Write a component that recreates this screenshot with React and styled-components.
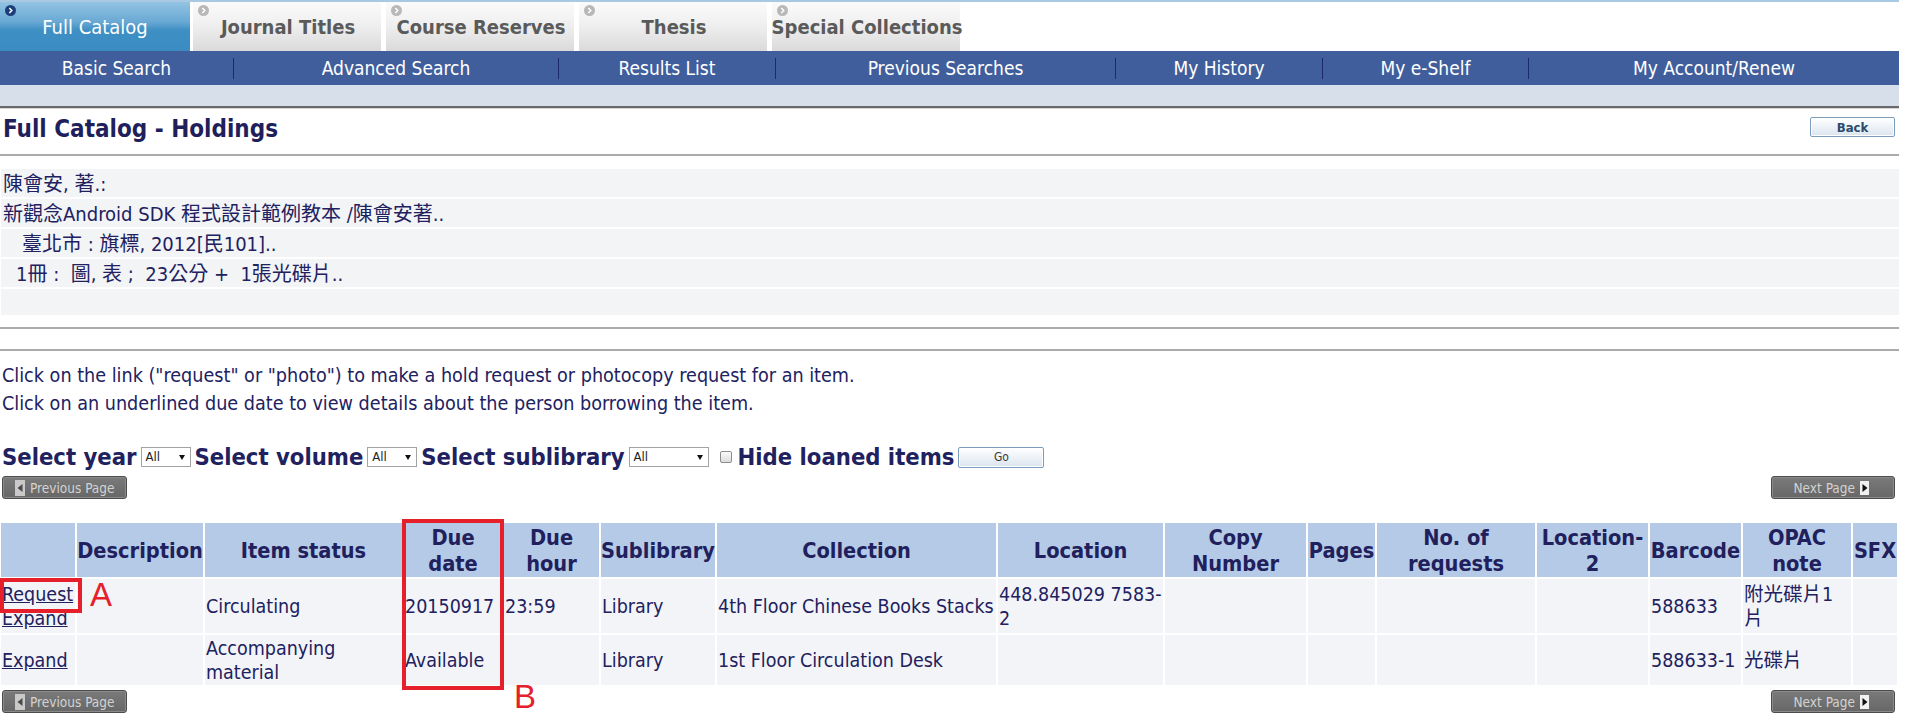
import React from "react";
import styled, { createGlobalStyle, css } from "styled-components";

const FONT = `"DejaVu Sans Condensed", "DejaVu Sans", "Noto Sans CJK TC", sans-serif`;
const NAVY = "#21215f";

const GlobalStyle = createGlobalStyle`
    body {
        margin: 0;
        background: #fff;
        font-family: ${FONT};
        font-stretch: condensed;
        color: ${NAVY};
    }
`;

const tabs = [
    { label: "Full Catalog", active: true },
    { label: "Journal Titles" },
    { label: "Course Reserves" },
    { label: "Thesis" },
    { label: "Special Collections" },
];

const navItems = [
    { label: "Basic Search", w: 233 },
    { label: "Advanced Search", w: 324 },
    { label: "Results List", w: 216 },
    { label: "Previous Searches", w: 339 },
    { label: "My History", w: 206 },
    { label: "My e-Shelf", w: 205 },
    { label: "My Account/Renew" },
];

const bibLines = [
    { text: "陳會安, 著.:", indent: 2 },
    { text: "新觀念Android SDK 程式設計範例教本 /陳會安著..", indent: 2 },
    { text: "臺北市 : 旗標, 2012[民101]..", indent: 21 },
    { text: "1冊 :  圖, 表 ;  23公分 +  1張光碟片..", indent: 15 },
    { text: "", indent: 0, last: true },
];

const columns = [74, 126, 197, 98, 95, 114, 279, 165, 141, 67, 158, 111, 91, 108, 44];

const headers = [
    "",
    "Description",
    "Item status",
    ["Due", "date"],
    ["Due", "hour"],
    "Sublibrary",
    "Collection",
    "Location",
    ["Copy", "Number"],
    "Pages",
    ["No. of", "requests"],
    ["Location-", "2"],
    "Barcode",
    ["OPAC", "note"],
    "SFX",
];

function Lines({ value }) {
    if (!Array.isArray(value)) return value;
    return value.map((line, i) => (
        <React.Fragment key={i}>
            {i > 0 && <br />}
            {line}
        </React.Fragment>
    ));
}

function TabIcon({ active }) {
    return (
        <IconSpot>
            <svg width="11" height="11" viewBox="0 0 11 11">
                <circle cx="5.5" cy="5.5" r="5.5" fill={active ? "#1c3f7c" : "#b8b8b8"} />
                <path d="M4.3 3 L6.8 5.5 L4.3 8" stroke="#fff" strokeWidth="1.5" fill="none" />
            </svg>
        </IconSpot>
    );
}

function PagerButtons() {
    return (
        <Pager>
            <PageButton $w={125}>
                <PageIcon $dir="prev" />
                Previous Page
            </PageButton>
            <PageButton $w={124} $next>
                Next Page
                <PageIcon $dir="next" />
            </PageButton>
        </Pager>
    );
}

function App() {
    return (
        <Page>
            <GlobalStyle />
            <TabBar>
                {tabs.map((t) => (
                    <Tab key={t.label} $active={t.active}>
                        <TabIcon active={t.active} />
                        {t.label}
                    </Tab>
                ))}
            </TabBar>
            <NavBar>
                {navItems.map((n, i) => (
                    <React.Fragment key={n.label}>
                        {i > 0 && <NavSep />}
                        <NavItem $w={n.w}>{n.label}</NavItem>
                    </React.Fragment>
                ))}
            </NavBar>
            <Band />
            <TitleRow>
                <Title>Full Catalog - Holdings</Title>
                <SmallButton $w={85} $h={20} $bold>
                    Back
                </SmallButton>
            </TitleRow>
            <BibBlock>
                {bibLines.map((b, i) => (
                    <BibRow key={i} $indent={b.indent} $last={b.last}>
                        {b.text}
                    </BibRow>
                ))}
            </BibBlock>
            <Rule $mt={12} />
            <Rule $mt={20} />
            <Intro>
                Click on the link ("request" or "photo") to make a hold request or photocopy request for an item.
                <br />
                Click on an underlined due date to view details about the person borrowing the item.
            </Intro>
            <FilterRow>
                <FilterLabel>Select year</FilterLabel>
                <FakeSelect $w={50}>All</FakeSelect>
                <FilterLabel>Select volume</FilterLabel>
                <FakeSelect $w={50}>All</FakeSelect>
                <FilterLabel>Select sublibrary</FilterLabel>
                <FakeSelect $w={80}>All</FakeSelect>
                <Checkbox />
                <FilterLabel>Hide loaned items</FilterLabel>
                <SmallButton $w={86} $h={21}>
                    Go
                </SmallButton>
            </FilterRow>
            <PagerWrap $mt={4}>
                <PagerButtons />
            </PagerWrap>
            <TableArea>
                <Holdings>
                    <colgroup>
                        {columns.map((w, i) => (
                            <col key={i} style={{ width: w }} />
                        ))}
                    </colgroup>
                    <thead>
                        <Row $h={54}>
                            {headers.map((h, i) => (
                                <Th key={i}>
                                    <Lines value={h} />
                                </Th>
                            ))}
                        </Row>
                    </thead>
                    <tbody>
                        <Row $h={54}>
                            <Td>
                                <LinkText>Request</LinkText>
                                <br />
                                <LinkText>Expand</LinkText>
                            </Td>
                            <Td />
                            <Td>Circulating</Td>
                            <Td>20150917</Td>
                            <Td>23:59</Td>
                            <Td>Library</Td>
                            <Td>4th Floor Chinese Books Stacks</Td>
                            <Td>
                                448.845029 7583-
                                <br />2
                            </Td>
                            <Td />
                            <Td />
                            <Td />
                            <Td />
                            <Td>588633</Td>
                            <Td>
                                附光碟片1
                                <br />片
                            </Td>
                            <Td />
                        </Row>
                        <Row $h={49}>
                            <Td>
                                <LinkText>Expand</LinkText>
                            </Td>
                            <Td />
                            <Td>
                                Accompanying
                                <br />
                                material
                            </Td>
                            <Td>Available</Td>
                            <Td />
                            <Td>Library</Td>
                            <Td>1st Floor Circulation Desk</Td>
                            <Td />
                            <Td />
                            <Td />
                            <Td />
                            <Td />
                            <Td>588633-1</Td>
                            <Td>光碟片</Td>
                            <Td />
                        </Row>
                    </tbody>
                </Holdings>
                <PagerWrap $mt={3}>
                    <PagerButtons />
                </PagerWrap>
                <MarkBox $x={0} $y={57} $w={82} $h={35} />
                <MarkLetter $x={90} $y={57}>
                    A
                </MarkLetter>
                <MarkBox $x={402} $y={-2} $w={102} $h={171} />
                <MarkLetter $x={514} $y={159}>
                    B
                </MarkLetter>
            </TableArea>
        </Page>
    );
}

const Page = styled.div`
    width: 1899px;
`;

const TabBar = styled.div`
    display: flex;
    gap: 3px;
    height: 51px;
    box-sizing: border-box;
    border-top: 2px solid #a9c8e1;
`;

const Tab = styled.div`
    position: relative;
    width: 190px;
    height: 49px;
    display: flex;
    align-items: center;
    justify-content: center;
    font-size: 20px;
    white-space: nowrap;

    ${(p) =>
        p.$active
            ? css`
                  background: linear-gradient(#92c3e2, #6aa9d4 40%, #3d8fc4 58%, #3a8cc2);
                  color: #fff;
              `
            : css`
                  background: linear-gradient(#fbfbfb, #eeeeee 50%, #dadada);
                  color: #5a5a5a;
                  font-weight: bold;
                  box-shadow: inset -2px 0 #ffffff;
              `}
`;

const IconSpot = styled.span`
    position: absolute;
    top: 3px;
    left: 5px;
    display: flex;
`;

const NavBar = styled.nav`
    display: flex;
    align-items: center;
    height: 34px;
    background: #405e9c;
`;

const NavItem = styled.div`
    ${(p) => (p.$w ? `width: ${p.$w}px;` : "flex: 1;")}
    text-align: center;
    color: #fff;
    font-size: 19px;
    white-space: nowrap;
`;

const NavSep = styled.span`
    width: 1px;
    height: 21px;
    background: #1d2a6a;
`;

const Band = styled.div`
    height: 21px;
    background: #d6dfea;
    border-bottom: 2px solid #696969;
    box-shadow: 0 1px 0 #d4d4d4;
`;

const TitleRow = styled.div`
    height: 46px;
    display: flex;
    align-items: flex-start;
    justify-content: space-between;
    padding: 0 4px 0 3px;
    border-bottom: 2px solid #ababab;
`;

const Title = styled.h1`
    margin: 7px 0 0;
    font-size: 24px;
    font-weight: bold;
    color: #1f1f5c;
`;

const SmallButton = styled.button`
    width: ${(p) => p.$w}px;
    height: ${(p) => p.$h}px;
    margin-top: ${(p) => (p.$bold ? "9px" : "0")};
    padding: 0;
    border: 1px solid #7c9cbb;
    border-radius: 2px;
    box-shadow: inset 0 0 0 1px #fff;
    background: linear-gradient(#ffffff, #e9eff5 60%, #dbe4ee);
    font-family: ${FONT};
    font-size: ${(p) => (p.$bold ? "13px" : "12px")};
    font-weight: ${(p) => (p.$bold ? "bold" : "normal")};
    color: ${(p) => (p.$bold ? "#2b4a6e" : "#3a3a3a")};
`;

const BibBlock = styled.div`
    margin-top: 13px;
    display: flex;
    flex-direction: column;
    gap: 2px;
`;

const BibRow = styled.div`
    height: ${(p) => (p.$last ? 26 : 28)}px;
    margin-left: 1px;
    padding-left: ${(p) => p.$indent}px;
    background: #f3f4f6;
    font-size: 20px;
    line-height: 30px;
    white-space: pre;
`;

const Rule = styled.div`
    height: 2px;
    margin-top: ${(p) => p.$mt}px;
    background: #ababab;
`;

const Intro = styled.div`
    margin-top: 11px;
    padding-left: 2px;
    font-size: 19.6px;
    line-height: 28px;
`;

const FilterRow = styled.div`
    margin-top: 24px;
    height: 30px;
    display: flex;
    align-items: center;
    gap: 4px;
    padding-left: 2px;
`;

const FilterLabel = styled.span`
    font-size: 23.6px;
    font-weight: bold;
    white-space: nowrap;
`;

const FakeSelect = styled.span`
    width: ${(p) => p.$w}px;
    height: 20px;
    box-sizing: border-box;
    display: flex;
    align-items: center;
    justify-content: space-between;
    padding: 0 5px 2px 4px;
    border: 1px solid #a3a3a3;
    background: #fff;
    font-size: 13px;
    color: #222;

    &::after {
        content: "";
        border-left: 3px solid transparent;
        border-right: 3px solid transparent;
        border-top: 5px solid #111;
        margin-top: 2px;
    }
`;

const Checkbox = styled.span`
    width: 12px;
    height: 12px;
    box-sizing: border-box;
    margin: 0 2px 0 7px;
    border: 1px solid #8d8d8d;
    border-radius: 2px;
    background: linear-gradient(#fbfbfb, #dcdcdc);
`;

const PagerWrap = styled.div`
    margin-top: ${(p) => p.$mt}px;
`;

const Pager = styled.div`
    display: flex;
    justify-content: space-between;
    padding: 0 4px 0 2px;
`;

const PageButton = styled.span`
    width: ${(p) => p.$w}px;
    height: 23px;
    box-sizing: border-box;
    display: flex;
    align-items: center;
    justify-content: ${(p) => (p.$next ? "flex-end" : "flex-start")};
    gap: 5px;
    padding: ${(p) => (p.$next ? "0 25px 0 0" : "0 0 0 12px")};
    border: 1px solid #4c4c4c;
    border-radius: 3px;
    box-shadow: inset 0 0 0 1px #8a8a8a;
    background: linear-gradient(#7a7a7a, #676767);
    color: #d2d2d2;
    font-size: 13.5px;
    white-space: nowrap;
`;

const PageIcon = styled.span`
    position: relative;
    width: ${(p) => (p.$dir === "next" ? 9 : 10)}px;
    height: ${(p) => (p.$dir === "next" ? 14 : 16)}px;
    background: ${(p) => (p.$dir === "next" ? "#f1f1f1" : "#c9c9c9")};

    &::after {
        content: "";
        position: absolute;
        top: 50%;
        left: 50%;
        transform: translate(-50%, -50%);
        border-top: 4px solid transparent;
        border-bottom: 4px solid transparent;
        ${(p) =>
            p.$dir === "next"
                ? "border-left: 5px solid #111;"
                : "border-right: 5px solid #4a4a4a;"}
    }
`;

const TableArea = styled.div`
    position: relative;
    margin-top: 22px;
`;

const Holdings = styled.table`
    border-spacing: 2px;
    margin-left: -1px;
    width: 1900px;
    table-layout: fixed;
`;

const Row = styled.tr`
    height: ${(p) => p.$h}px;
`;

const Th = styled.th`
    padding: 2px 0 0;
    background: #b5cae7;
    font-size: 21.6px;
    font-weight: bold;
    line-height: 26px;
    color: #20205c;
    text-align: center;
    vertical-align: middle;
    white-space: nowrap;
`;

const Td = styled.td`
    padding: 2px 1px 0;
    background: #f3f4f7;
    font-size: 19.5px;
    line-height: 24px;
    text-align: left;
    vertical-align: middle;
    white-space: nowrap;
`;

const LinkText = styled.a`
    color: ${NAVY};
    text-decoration: underline;
    cursor: pointer;
`;

const MarkBox = styled.div`
    position: absolute;
    left: ${(p) => p.$x}px;
    top: ${(p) => p.$y}px;
    width: ${(p) => p.$w}px;
    height: ${(p) => p.$h}px;
    box-sizing: border-box;
    border: 4px solid #e5202b;
    pointer-events: none;
`;

const MarkLetter = styled.span`
    position: absolute;
    left: ${(p) => p.$x}px;
    top: ${(p) => p.$y}px;
    font-family: "Liberation Sans", sans-serif;
    font-stretch: normal;
    font-size: 33px;
    line-height: 33px;
    color: #e5202b;
`;

export default App;
